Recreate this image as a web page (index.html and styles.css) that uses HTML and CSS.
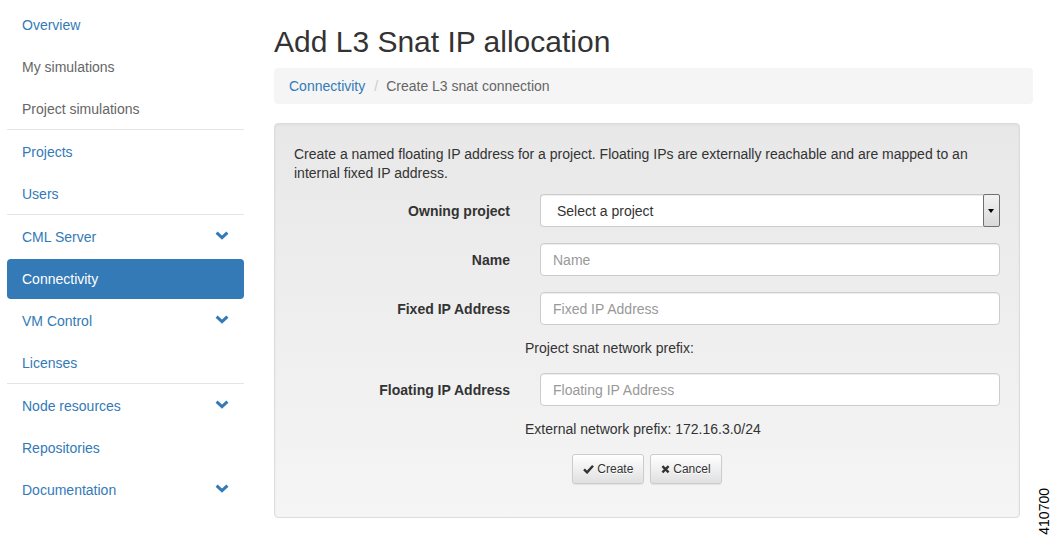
FILE: index.html
```html
<!DOCTYPE html>
<html lang="en">
<head>
    <meta charset="UTF-8">
    <meta name="viewport" content="width=device-width, initial-scale=1.0">
    <title>Add L3 Snat IP allocation</title>
    <link rel="stylesheet" href="styles.css">
</head>
<body>
    <div class="page">
        <nav class="sidebar">
            <ul class="nav-group">
                <li><a class="nav-link" href="#">Overview</a></li>
                <li><a class="nav-link muted" href="#">My simulations</a></li>
                <li><a class="nav-link muted" href="#">Project simulations</a></li>
            </ul>
            <ul class="nav-group">
                <li><a class="nav-link" href="#">Projects</a></li>
                <li><a class="nav-link" href="#">Users</a></li>
            </ul>
            <ul class="nav-group">
                <li><a class="nav-link" href="#">CML Server <svg class="chevron" width="14" height="9" viewBox="0 0 14 9"><polyline points="1.6,1.6 7,6.6 12.4,1.6"/></svg></a></li>
                <li><a class="nav-link active" href="#">Connectivity</a></li>
                <li><a class="nav-link" href="#">VM Control <svg class="chevron" width="14" height="9" viewBox="0 0 14 9"><polyline points="1.6,1.6 7,6.6 12.4,1.6"/></svg></a></li>
                <li><a class="nav-link" href="#">Licenses</a></li>
            </ul>
            <ul class="nav-group">
                <li><a class="nav-link" href="#">Node resources <svg class="chevron" width="14" height="9" viewBox="0 0 14 9"><polyline points="1.6,1.6 7,6.6 12.4,1.6"/></svg></a></li>
                <li><a class="nav-link" href="#">Repositories</a></li>
                <li><a class="nav-link" href="#">Documentation <svg class="chevron" width="14" height="9" viewBox="0 0 14 9"><polyline points="1.6,1.6 7,6.6 12.4,1.6"/></svg></a></li>
            </ul>
        </nav>

        <main class="main">
            <h1>Add L3 Snat IP allocation</h1>

            <ol class="breadcrumb">
                <li><a href="#">Connectivity</a></li>
                <li class="active">Create L3 snat connection</li>
            </ol>

            <form class="well">
                <p>Create a named floating IP address for a project. Floating IPs are externally reachable and are mapped to an internal fixed IP address.</p>

                <div class="form-group">
                    <label>Owning project</label>
                    <div class="select">
                        <span>Select a project</span>
                        <span class="select-arrow"></span>
                    </div>
                </div>
                <div class="form-group">
                    <label for="name">Name</label>
                    <input id="name" type="text" placeholder="Name">
                </div>
                <div class="form-group">
                    <label for="fixed">Fixed IP Address</label>
                    <input id="fixed" type="text" placeholder="Fixed IP Address">
                </div>
                <div class="help">Project snat network prefix:</div>
                <div class="form-group">
                    <label for="floating">Floating IP Address</label>
                    <input id="floating" type="text" placeholder="Floating IP Address">
                </div>
                <div class="help">External network prefix: 172.16.3.0/24</div>

                <div class="actions">
                    <button type="button" class="btn"><svg class="icon" width="11" height="10" viewBox="0 0 11 10"><path d="M1 5.4 L4.1 8.4 L10 1.8"/></svg>Create</button>
                    <button type="button" class="btn"><svg class="icon" width="9" height="10" viewBox="0 0 9 10"><path d="M1.4 2.2 L7.6 8.4 M7.6 2.2 L1.4 8.4"/></svg>Cancel</button>
                </div>
            </form>
        </main>
    </div>

    <div class="fig-id">410700</div>
</body>
</html>
```

FILE: styles.css
```css
body {
    margin: 0;
    font-family: "Liberation Sans", Arial, sans-serif;
    font-size: 14px;
    line-height: 20px;
    color: #333;
    background: #fff;
}

.page {
    display: flex;
    align-items: flex-start;
}

/* sidebar */

.sidebar {
    width: 237px;
    margin-left: 7px;
    padding-top: 3px;
}

.nav-group {
    list-style: none;
    margin: 0;
    padding: 0;
}

.nav-group + .nav-group {
    border-top: 1px solid #e5e5e5;
}

.nav-group li {
    margin-top: 2px;
}

.nav-link {
    display: flex;
    justify-content: space-between;
    align-items: center;
    padding: 10px 15px;
    line-height: 20px;
    color: #337ab7;
    text-decoration: none;
    border-radius: 4px;
}

.nav-link.muted {
    color: #666;
}

.nav-link.active {
    background: #337ab7;
    color: #fff;
}

.chevron {
    margin-top: -4px;
    fill: none;
    stroke: #337ab7;
    stroke-width: 3;
}

/* main column */

.main {
    width: 759px;
    margin-left: 30px;
}

h1 {
    margin: 25px 0 10px;
    font-size: 30px;
    font-weight: normal;
    line-height: 33px;
    color: #333;
}

.breadcrumb {
    list-style: none;
    margin: 0 0 19px;
    padding: 8px 15px;
    background: #f5f5f5;
    border-radius: 4px;
    display: flex;
}

.breadcrumb a {
    color: #337ab7;
    text-decoration: none;
}

.breadcrumb li + li::before {
    content: "/";
    padding: 0 8px 0 9px;
    color: #ccc;
}

.breadcrumb .active {
    color: #666;
}

/* well + form */

.well {
    box-sizing: border-box;
    width: 746px;
    margin: 0;
    padding: 21px 19px 33px;
    border: 1px solid #dcdcdc;
    border-radius: 4px;
    background: linear-gradient(to bottom, #e8e8e8 0, #f5f5f5 100%);
    box-shadow: inset 0 1px 3px rgba(0, 0, 0, .05), 0 1px 0 rgba(255, 255, 255, .1);
}

.well p {
    margin: 0 0 11px;
    line-height: 19px;
}

.form-group {
    display: flex;
    align-items: center;
    margin-bottom: 16px;
}

.form-group label {
    width: 216px;
    margin-right: 30px;
    text-align: right;
    font-weight: bold;
}

.form-group input,
.select {
    box-sizing: border-box;
    width: 460px;
    height: 33px;
    border: 1px solid #ccc;
    border-radius: 4px;
    background: #fff;
    box-shadow: inset 0 1px 1px rgba(0, 0, 0, .075);
}

.form-group input {
    padding: 6px 12px;
    font-family: inherit;
    font-size: 14px;
    color: #333;
}

.form-group input::placeholder {
    color: #999;
}

.select {
    display: flex;
    align-items: center;
    justify-content: space-between;
    padding-left: 16px;
    border-right: none;
    color: #333;
}

.select-arrow {
    box-sizing: border-box;
    width: 17px;
    height: 33px;
    border: 1px solid #707070;
    border-radius: 2px;
    background: linear-gradient(to bottom, #f2f2f2, #d9d9d9);
    position: relative;
}

.select-arrow::after {
    content: "";
    position: absolute;
    left: 4px;
    top: 14px;
    border-left: 3.5px solid transparent;
    border-right: 3.5px solid transparent;
    border-top: 4px solid #000;
}

.help {
    margin: -3px 0 15px 231px;
}

.help:last-of-type {
    margin-bottom: 0;
}

.actions {
    margin-top: 15px;
    text-align: center;
}

.btn {
    height: 30px;
    padding: 5px 10px;
    margin: 0 1px;
    font-family: inherit;
    font-size: 12px;
    line-height: 18px;
    color: #333;
    border: 1px solid #ccc;
    border-radius: 3px;
    background: linear-gradient(to bottom, #fff 0, #e0e0e0 100%);
    text-shadow: 0 1px 0 #fff;
    box-shadow: inset 0 1px 0 rgba(255, 255, 255, .15), 0 1px 1px rgba(0, 0, 0, .075);
    cursor: pointer;
}

.icon {
    margin-right: 3px;
    vertical-align: -1px;
    fill: none;
    stroke: #333;
    stroke-width: 2.4;
}

.fig-id {
    position: absolute;
    left: 1036px;
    top: 488px;
    writing-mode: vertical-rl;
    transform: rotate(180deg);
    font-size: 14px;
    line-height: 16px;
    color: #000;
}
```
